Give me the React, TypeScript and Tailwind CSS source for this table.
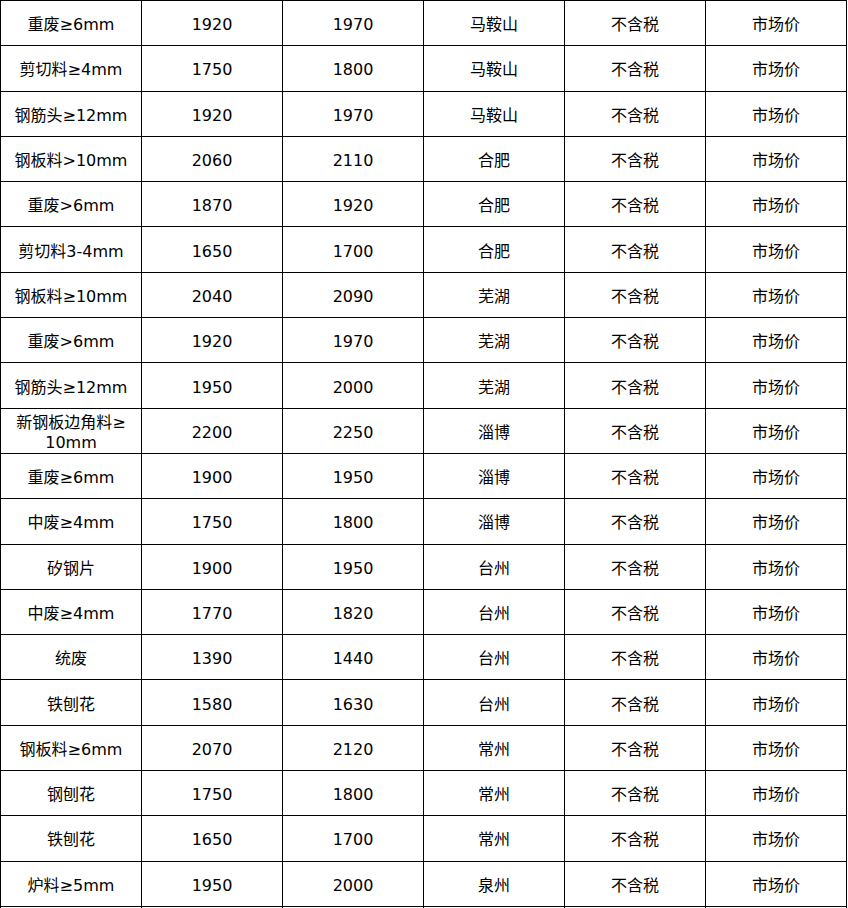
import React from 'react';

const rows: [string, string, string, string][] = [
  ['重废≥6mm', '1920', '1970', '马鞍山'],
  ['剪切料≥4mm', '1750', '1800', '马鞍山'],
  ['钢筋头≥12mm', '1920', '1970', '马鞍山'],
  ['钢板料>10mm', '2060', '2110', '合肥'],
  ['重废>6mm', '1870', '1920', '合肥'],
  ['剪切料3-4mm', '1650', '1700', '合肥'],
  ['钢板料≥10mm', '2040', '2090', '芜湖'],
  ['重废>6mm', '1920', '1970', '芜湖'],
  ['钢筋头≥12mm', '1950', '2000', '芜湖'],
  ['新钢板边角料≥\n10mm', '2200', '2250', '淄博'],
  ['重废≥6mm', '1900', '1950', '淄博'],
  ['中废≥4mm', '1750', '1800', '淄博'],
  ['矽钢片', '1900', '1950', '台州'],
  ['中废≥4mm', '1770', '1820', '台州'],
  ['统废', '1390', '1440', '台州'],
  ['铁刨花', '1580', '1630', '台州'],
  ['钢板料≥6mm', '2070', '2120', '常州'],
  ['钢刨花', '1750', '1800', '常州'],
  ['铁刨花', '1650', '1700', '常州'],
  ['炉料≥5mm', '1950', '2000', '泉州'],
  ['', '', '', ''],
];

export default function App() {
  return (
    <div className="w-[848px] h-[908px] overflow-hidden bg-white">
      <table
        className="w-[847px] table-fixed border-collapse text-[16px] leading-[20px] text-black"
        style={{ fontFamily: '"DejaVu Sans", "Noto Sans CJK SC", sans-serif' }}
      >
        <tbody>
          {rows.map((r, i) => (
            <tr key={i} className="h-[45.3px]">
              {[r[0], r[1], r[2], r[3], r[0] ? '不含税' : '', r[0] ? '市场价' : ''].map((c, j) => (
                <td
                  key={j}
                  className="border border-black px-1 pt-[4px] pb-0 text-center align-middle whitespace-pre-line"
                >
                  {c}
                </td>
              ))}
            </tr>
          ))}
        </tbody>
      </table>
    </div>
  );
}
